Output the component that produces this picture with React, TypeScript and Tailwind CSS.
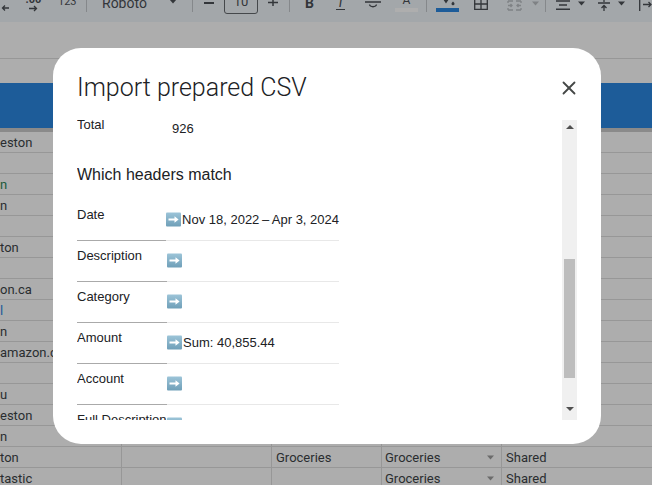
import { X } from 'lucide-react';

const sheetRows = [
  { first: 'eston', tint: 'text-[#2a2d30]' },
  { first: '', tint: '' },
  { first: 'n', tint: 'text-[#1c5a3a]' },
  { first: 'n', tint: 'text-[#2a2d30]' },
  { first: '', tint: '' },
  { first: 'ton', tint: 'text-[#2a2d30]' },
  { first: '', tint: '' },
  { first: 'on.ca', tint: 'text-[#2a2d30]' },
  { first: 'l', tint: 'text-[#1d5c99]' },
  { first: 'n', tint: 'text-[#2a2d30]' },
  { first: 'amazon.c', tint: 'text-[#2a2d30]' },
  { first: '', tint: '' },
  { first: 'u', tint: 'text-[#2a2d30]' },
  { first: 'eston', tint: 'text-[#2a2d30]' },
  { first: 'n', tint: 'text-[#2a2d30]' },
  { first: 'ton', tint: 'text-[#2a2d30]', cat: 'Groceries', sub: 'Groceries', who: 'Shared' },
  { first: 'tastic', tint: 'text-[#2a2d30]', sub: 'Groceries', who: 'Shared' },
];

const headerRows = [
  { label: 'Date', value: 'Nov 18, 2022\u2009–\u2009Apr 3, 2024' },
  { label: 'Description', value: '' },
  { label: 'Category', value: '' },
  { label: 'Amount', value: 'Sum: 40,855.44' },
  { label: 'Account', value: '' },
  { label: 'Full Description', value: '' },
];

function ArrowEmoji() {
  return (
    <svg width="15" height="15" viewBox="0 0 15 15" className="shrink-0">
      <defs>
        <linearGradient id="arrowBox" x1="0" y1="0" x2="0" y2="1">
          <stop offset="0" stopColor="#9cc4d8" />
          <stop offset="1" stopColor="#6f9fb8" />
        </linearGradient>
      </defs>
      <rect x="0" y="0.5" width="15" height="14" rx="1" fill="url(#arrowBox)" />
      <path d="M2.5 6.5h6V4.2L12.6 7.5 8.5 10.8V8.5h-6z" fill="#fff" />
    </svg>
  );
}

function Caret({ className }: { className: string }) {
  return (
    <svg width="7" height="5" viewBox="0 0 7 5" className={className} fill="currentColor">
      <path d="M0 .5h7L3.5 4.5z" />
    </svg>
  );
}

function Sep({ className }: { className: string }) {
  return <div className={`h-[12px] w-px shrink-0 bg-[#85888b] ${className}`} />;
}

function Toolbar() {
  return (
    <div className="h-[22px] overflow-hidden bg-[#a3a7aa] text-[#33363a]">
      <div className="flex h-[22px] w-[660px] items-start font-['Roboto',sans-serif]">
        <svg width="9" height="12" viewBox="0 0 9 12" className="ml-[1px] shrink-0" fill="none" stroke="currentColor" strokeWidth="1.3">
          <path d="M8 8H1.5M4 5.5 1.5 8 4 10.5" />
        </svg>
        <div className="ml-[15px] flex w-[17px] shrink-0 flex-col items-center">
          <span className="-mt-[6px] text-[11px] font-bold leading-[11px]">.00</span>
          <svg width="9" height="7" viewBox="0 0 9 7" fill="none" stroke="currentColor" strokeWidth="1.3">
            <path d="M0 3.5h7M5 1l2.5 2.5L5 6" />
          </svg>
        </div>
        <span className="ml-[16px] -mt-[4px] w-[17px] shrink-0 text-center text-[11px] leading-[11px]">123</span>
        <Sep className="ml-[11px]" />
        <span className="ml-[15px] -mt-[5px] w-[47px] shrink-0 text-[14px] leading-[16px]">Roboto</span>
        <Caret className="ml-[20px] -mt-[1px] w-[8px] shrink-0" />
        <Sep className="ml-[15px]" />
        <div className="ml-[11px] mt-[2px] h-[1.5px] w-[10px] shrink-0 bg-current" />
        <div className="ml-[10px] -mt-[10px] flex h-[24px] w-[34px] shrink-0 items-center justify-center rounded-[3px] border border-[#45484b] text-[13px]">10</div>
        <svg width="10" height="8" viewBox="0 0 10 8" className="ml-[10px] shrink-0" fill="none" stroke="currentColor" strokeWidth="1.5">
          <path d="M0 2.5h10M5 -3v9" />
        </svg>
        <Sep className="ml-[11px]" />
        <span className="ml-[15px] -mt-[5px] w-[9px] shrink-0 text-[14px] font-bold leading-[16px]">B</span>
        <span className="ml-[22px] -mt-[5px] w-[9px] shrink-0 border-b border-current text-center text-[14px] italic leading-[14px]">I</span>
        <svg width="16" height="9" viewBox="0 0 16 9" className="ml-[20px] shrink-0" fill="none" stroke="currentColor" strokeWidth="1.3">
          <path d="M0 2h16M4.5 4.5c.5 3 6.5 3 7 0" />
        </svg>
        <div className="ml-[14px] flex w-[23px] shrink-0 flex-col items-center">
          <span className="-mt-[6px] text-[12px] leading-[12px]">A</span>
          <div className="mt-[2px] h-[4px] w-[23px] bg-[#aeaeae]" />
        </div>
        <Sep className="ml-[8px]" />
        <div className="ml-[9px] flex w-[23px] shrink-0 flex-col items-center">
          <svg width="14" height="8" viewBox="0 0 14 8" fill="currentColor">
            <path d="M0 -4h10l-5 7.5zM12 1.5c1 1 1.5 1.6 1.5 2.2a1.5 1.5 0 0 1-3 0c0-.6.5-1.2 1.5-2.2z" />
          </svg>
          <div className="h-[4px] w-[23px] bg-[#1d5c99]" />
        </div>
        <svg width="14" height="10" viewBox="0 0 14 10" className="ml-[15px] shrink-0" fill="none" stroke="currentColor" strokeWidth="1.3">
          <path d="M.7 -3v12.3h12.6V-3M0 4h14M7 -3v12" />
        </svg>
        <svg width="15" height="11" viewBox="0 0 15 11" className="ml-[19px] shrink-0 text-[#7f8285]" fill="none" stroke="currentColor" strokeWidth="1.3">
          <path d="M1 1h5M1 10h5M1 1v2M1 8v2M9 1h5M9 10h5M14 1v2M14 8v2M1 5.5h4M3.5 4l1.5 1.5L3.5 7M14 5.5h-4M11.5 4 10 5.5 11.5 7" />
        </svg>
        <Caret className="ml-[10px] mt-[1px] shrink-0 text-[#7f8285]" />
        <Sep className="ml-[6px]" />
        <svg width="14" height="11" viewBox="0 0 14 11" className="ml-[10px] shrink-0" fill="none" stroke="currentColor" strokeWidth="1.4">
          <path d="M0 1h14M3 5h8M0 9.3h14" />
        </svg>
        <Caret className="ml-[8px] mt-[1px] shrink-0" />
        <svg width="12" height="12" viewBox="0 0 12 12" className="ml-[13px] shrink-0" fill="none" stroke="currentColor" strokeWidth="1.3">
          <path d="M0 3h12M6 11V5.5M3.5 8 6 5.5 8.5 8M6 -1v3" />
        </svg>
        <Caret className="ml-[8px] mt-[1px] shrink-0" />
        <svg width="13" height="12" viewBox="0 0 13 12" className="ml-[14px] shrink-0" fill="none" stroke="currentColor" strokeWidth="1.3">
          <path d="M.7 -1v12M4 4.5h8M9.500 2 12 4.5 9.500 7" />
        </svg>
      </div>
    </div>
  );
}

function Sheet() {
  return (
    <div className="h-[485px] overflow-hidden bg-[#adadad]">
      <Toolbar />
      <div className="h-[37px] border-b border-[#979797]" />
      <div className="h-[24px]" />
      <div className="h-[45px] bg-[#1d5c99]" />
      <div className="h-[4px] bg-[#8a8a8a]" />
      {sheetRows.map((row, i) => (
        <div key={i} className="flex h-[21px] border-b border-[#979797] font-['Roboto',sans-serif] text-[13px] leading-[22px] text-[#2a2d30]">
          <div className={`w-[122px] overflow-hidden whitespace-nowrap border-r border-[#979797] ${row.tint}`}>{row.first}</div>
          <div className="w-[150px] border-r border-[#979797]" />
          <div className="w-[110px] border-r border-[#979797] pl-[4px]">{row.cat}</div>
          <div className="flex w-[120px] items-start justify-between border-r border-[#979797] pl-[3px] pr-[7px]">
            <span>{row.sub}</span>
            {row.sub && <Caret className="mt-[8px] text-[#6b6b6b]" />}
          </div>
          <div className="flex-1 pl-[4px]">{row.who}</div>
        </div>
      ))}
    </div>
  );
}

function ImportDialog() {
  return (
    <div className="absolute left-[53px] top-[48px] flex h-[396px] w-[548px] flex-col rounded-[28px] bg-white">
      <div className="flex h-[72px] items-start justify-between pl-[24px] pr-[21px] pt-[24px]">
        <h1 className="font-['Roboto',sans-serif] text-[25px] font-light leading-[32px] text-[#202124]">Import prepared CSV</h1>
        <X size={22} strokeWidth={2} className="mt-[5px] text-[#444746]" />
      </div>
      <div className="flex h-[300px] pl-[24px] pr-[24px]">
        <div className="flex-1 overflow-hidden font-['Liberation_Sans',sans-serif] text-[13px] text-[#202124]">
          <div className="flex w-[262px]">
            <div className="w-[95px] -mt-[3px] leading-[15px]">Total</div>
            <div className="mt-[1px] leading-[15px]">926</div>
          </div>
          <div className="mt-[30px] text-[16px] leading-[18px]">Which headers match</div>
          <div className="mt-[16px] w-[262px]">
            {headerRows.map((row) => (
              <div key={row.label} className="flex h-[41px]">
                <div className="w-[90px] whitespace-nowrap border-b border-[#aaaaaa] pt-[7px] leading-[15px]">{row.label}</div>
                <div className="flex flex-1 items-start whitespace-nowrap border-b border-[#e8e8e8] pt-[12px] leading-[15px]">
                  <ArrowEmoji />
                  <span className="ml-px">{row.value}</span>
                </div>
              </div>
            ))}
          </div>
        </div>
        <div className="flex w-[15px] flex-col items-center bg-[#f0f0f0]">
          <span className="mt-[5px] h-0 w-0 border-x-[4px] border-b-[4px] border-x-transparent border-b-[#505050]" />
          <div className="mt-[130px] h-[119px] w-[11px] bg-[#bdbdbd]" />
          <span className="mt-[29px] h-0 w-0 border-x-[4px] border-t-[4px] border-x-transparent border-t-[#505050]" />
        </div>
      </div>
    </div>
  );
}

export default function App() {
  return (
    <div className="relative h-[485px] w-[652px] overflow-hidden">
      <Sheet />
      <ImportDialog />
    </div>
  );
}
